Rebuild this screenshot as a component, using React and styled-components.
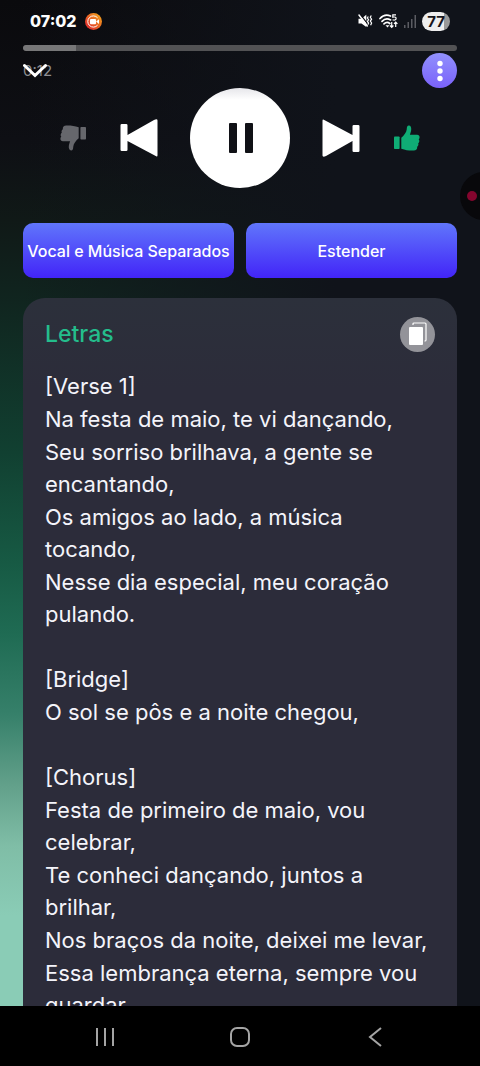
import React from 'react'
import styled, { createGlobalStyle } from 'styled-components'

const GlobalStyle = createGlobalStyle`
    * {
        box-sizing: border-box;
    }

    body {
        margin: 0;
        background: #000;
        font-family: 'Inter', 'Noto Sans', sans-serif;
        color: #FDFDFD;
    }

    button {
        border: 0;
        padding: 0;
        background: none;
        color: inherit;
        font-family: inherit;
        cursor: pointer;
    }

    svg {
        display: block;
    }
`;

const Screen = styled.div`
    position: relative;
    display: flex;
    flex-direction: column;
    height: 100vh;
    overflow: hidden;
`;

const Player = styled.main`
    flex: 1;
    min-height: 0;
    overflow: hidden;
    padding: 0 23px;
    background:
        linear-gradient(90deg, transparent 0, transparent 22px, #10131a 70%),
        linear-gradient(180deg, #0a0a0d 0, #0e0f14 14%, #101917 22%, #10251f 30%, #114031 45%, #175a44 56%, #1f6b53 63%, #36806a 71%, #62a08a 78%, #7fbda6 84%, #8accb6 91%);
`;

const StatusBar = styled.header`
    display: flex;
    align-items: center;
    justify-content: space-between;
    height: 45px;
    padding: 0 7px;
    padding-bottom: 3px;
`;

const StatusGroup = styled.div`
    display: flex;
    align-items: center;
    gap: ${props => props.$gap};
`;

const Clock = styled.span`
    font-size: 16px;
    font-weight: 800;
`;

const Battery = styled.span`
    width: 28px;
    border-radius: 10px;
    background: linear-gradient(90deg, #eee 77%, #999 77%);
    color: #15151a;
    font-size: 15px;
    font-weight: 700;
    line-height: 19px;
    text-align: center;
`;

const Track = styled.div`
    height: 6px;
    border-radius: 3px;
    background: #525254;
    overflow: hidden;
`;

const Played = styled.div`
    height: 100%;
    border-radius: 3px 0 0 3px;
    background: #777778;
`;

const TimeRow = styled.div`
    display: flex;
    align-items: center;
    justify-content: space-between;
    height: 37px;
    padding-top: 2px;
`;

const Elapsed = styled.div`
    position: relative;
    color: #8e8e92;
    font-size: 15px;
    line-height: 20px;
`;

const Collapse = styled.button`
    position: absolute;
    top: 0;
    left: 0;
`;

const MenuButton = styled.button`
    display: grid;
    place-items: center;
    width: 35px;
    height: 35px;
    border-radius: 50%;
    background: linear-gradient(180deg, #9190fc, #7a62fa);
`;

const Controls = styled.div`
    display: flex;
    align-items: center;
    justify-content: center;
    gap: 32px;
`;

const ControlButton = styled.button`
    display: grid;
    place-items: center;
    width: ${props => props.$width};
    height: 38px;
    color: ${props => props.$color || '#fff'};
`;

const PlayButton = styled.button`
    display: grid;
    place-items: center;
    width: 100px;
    height: 100px;
    border-radius: 50%;
    background: linear-gradient(180deg, #e6e6ea 0, #fff 12%);
    color: #101116;
`;

const Actions = styled.div`
    display: grid;
    grid-template-columns: repeat(2, 1fr);
    gap: 12px;
    margin-top: 35px;
`;

const ActionButton = styled.button`
    height: 55px;
    border-radius: 10px;
    background: linear-gradient(180deg, #6076fb 0, #4224f8 100%);
    color: #fff;
    font-size: 16px;
    font-weight: 500;
    white-space: nowrap;
`;

const LyricsCard = styled.section`
    margin-top: 20px;
    padding: 18px 22px;
    border-radius: 22px;
    background: linear-gradient(180deg, #2c303b 0, #2c2c3a 90px);
`;

const CardHeader = styled.div`
    display: flex;
    align-items: center;
    justify-content: space-between;
    height: 36px;
    margin-bottom: 18px;
`;

const CardTitle = styled.h2`
    margin: 0;
    color: #24bd8c;
    font-size: 23px;
    font-weight: 500;
`;

const CopyButton = styled.button`
    display: grid;
    place-items: center;
    width: 35px;
    height: 35px;
    border-radius: 50%;
    background: #939399;
`;

const Lyrics = styled.div`
    display: grid;
    gap: 33px;
`;

const Stanza = styled.div`
    display: grid;
    gap: 1px;
`;

const Line = styled.p`
    margin: 0;
    color: #f4f4fa;
    font-size: 22px;
    line-height: 32px;
`;

const RecordBubble = styled.div`
    position: absolute;
    top: 172px;
    right: -28px;
    width: 48px;
    height: 48px;
    padding: 19px 7px;
    border-radius: 50%;
    background: #08080b;
`;

const RecordDot = styled.div`
    width: 10px;
    height: 10px;
    border-radius: 50%;
    background: #84052e;
`;

const SystemNav = styled.nav`
    display: grid;
    grid-template-columns: repeat(3, 135px);
    justify-content: center;
    height: 60px;
    padding-top: 2px;
    background: #000;
`;

const NavButton = styled.button`
    display: grid;
    place-items: center;
`;

const stanzas = [
    [
        '[Verse 1]',
        'Na festa de maio, te vi dançando,',
        'Seu sorriso brilhava, a gente se encantando,',
        'Os amigos ao lado, a música tocando,',
        'Nesse dia especial, meu coração pulando.',
    ],
    [
        '[Bridge]',
        'O sol se pôs e a noite chegou,',
    ],
    [
        '[Chorus]',
        'Festa de primeiro de maio, vou celebrar,',
        'Te conheci dançando, juntos a brilhar,',
        'Nos braços da noite, deixei me levar,',
        'Essa lembrança eterna, sempre vou guardar.',
    ],
];

const RecorderIcon = () => (
    <svg width="17" height="17" viewBox="0 0 17 17">
        <defs>
            <linearGradient id="rec" x1="0" y1="1" x2="1" y2="0">
                <stop offset="0.2" stopColor="#e0362c" />
                <stop offset="0.9" stopColor="#f5a31c" />
            </linearGradient>
        </defs>
        <circle cx="8.5" cy="8.5" r="8.5" fill="url(#rec)" />
        <path d="M12.6 12.2A5.6 5.6 0 1 1 12.6 4.8" fill="none" stroke="#fff" strokeWidth="1" />
        <rect x="5" y="6" width="6" height="5.2" rx="1" fill="#fff" />
        <path d="M11 8.6L14 6.2V11z" fill="#fff" />
    </svg>
);

const MuteIcon = () => (
    <svg width="15" height="14" viewBox="0 0 15 14" fill="none" stroke="#fff">
        <path d="M0.500 4.700H3.500L8.300 0.800V13L3.500 9.600H0.500z" fill="#fff" stroke="none" />
        <path d="M2.400 0.600L10 10.300" stroke="#0a0b12" strokeWidth="1.300" />
        <path d="M1 1L9.300 12" strokeWidth="1.500" strokeLinecap="round" />
        <path d="M10.300 2.500l-.9 1.500 1.200 1.700-1.200 1.700 1.200 1.700-.8 1.500M13.300 1.500l-1 1.800 1.300 1.900-1.300 1.900 1.300 1.900-1 2.200" strokeWidth="1.200" />
    </svg>
);

const WifiIcon = () => (
    <svg width="19" height="15" viewBox="0 0 19 15" fill="none" stroke="#fff" strokeWidth="1.700">
        <path d="M1 4.500C4 1.200 8 0.600 11.500 2M3 7.300c2.400-2.500 5.600-3 8.600-1.400M5 9.900c1.700-1.600 4-1.800 5.800-.4" strokeLinecap="round" />
        <path d="M6.500 11.300L8.500 13.500 10.500 11.300z" fill="#fff" stroke="none" />
        <path d="M17 0.900h-3.200v2.300c2.400-.6 3.500.2 3.300 1.500-.2 1.400-2 1.800-3.500 1" strokeWidth="1.200" />
        <path d="M12.700 8v5M11 11.500l1.700 1.800 1.700-1.800M16.700 13V8.200M15 9.800l1.700-1.800 1.700 1.800" strokeWidth="1.200" />
    </svg>
);

const SignalIcon = () => (
    <svg width="12" height="13" viewBox="0 0 12 13" fill="#5b5c62">
        <rect x="0" y="10" width="1.500" height="3" />
        <rect x="3.500" y="7" width="1.500" height="6" />
        <rect x="7" y="4" width="1.500" height="9" />
        <rect x="10.500" y="0" width="1.500" height="13" />
    </svg>
);

const ThumbIcon = () => (
    <svg width="26" height="26" viewBox="0 0 26 26" fill="currentColor">
        <rect x="0" y="11.500" width="5.600" height="12.500" rx="0.800" />
        <path d="M7.300 12.800C10 10.500 12.400 7.400 12.700 4.500C12.900 2 13.200 0.600 14.900 0.600C16.700 0.600 17.400 2.700 17.200 4.700C17 6.800 16.300 8.200 15.900 9.700H23C24.900 9.700 26 11.200 25.500 12.900C25.400 13.400 25.100 13.900 24.700 14.200C25.700 15.600 25.500 17.300 24.200 18.300C24.700 19.700 24.300 21 23.200 21.700C23.400 24.300 22.100 25.500 19.800 25.500C15 25.600 11.500 25.200 7.300 23.700z" />
    </svg>
);

const FlippedIcon = styled.span`
    transform: rotate(180deg);
`;

const SkipIcon = () => (
    <svg width="38" height="38" viewBox="0 0 38 38" fill="currentColor">
        <path d="M1.800 0.700L30.500 15.900V7.300Q30.500 6 31.800 6H36.200Q37.500 6 37.500 7.300V31.700Q37.500 33 36.200 33H31.800Q30.500 33 30.500 31.700V22L4 37Q0.500 38.500 0.500 36.500V1.800Q0.500 0 1.800 0.700z" />
    </svg>
);

function App() {
    return (
        <Screen>
            <GlobalStyle />
            <Player>
                <StatusBar>
                    <StatusGroup $gap="8px">
                        <Clock>07:02</Clock>
                        <RecorderIcon />
                    </StatusGroup>
                    <StatusGroup $gap="6px">
                        <MuteIcon />
                        <WifiIcon />
                        <SignalIcon />
                        <Battery>77</Battery>
                    </StatusGroup>
                </StatusBar>

                <Track>
                    <Played style={{ width: `${(12 / 98) * 100}%` }} />
                </Track>
                <TimeRow>
                    <Elapsed>
                        0:12
                        <Collapse aria-label="Fechar">
                            <svg width="26" height="20" viewBox="0 0 26 20" fill="none" stroke="#fff" strokeWidth="3" strokeLinecap="round">
                                <path d="M1.500 4.500L12 14.500L22.500 4.500" />
                            </svg>
                        </Collapse>
                    </Elapsed>
                    <MenuButton aria-label="Mais opções">
                        <svg width="6" height="22" viewBox="0 0 6 22" fill="#fff">
                            <circle cx="3" cy="3.500" r="2.700" />
                            <circle cx="3" cy="11" r="2.700" />
                            <circle cx="3" cy="18.500" r="2.700" />
                        </svg>
                    </MenuButton>
                </TimeRow>

                <Controls>
                    <ControlButton $width="30px" $color="#66676c" aria-label="Não gostei">
                        <FlippedIcon><ThumbIcon /></FlippedIcon>
                    </ControlButton>
                    <ControlButton $width="38px" aria-label="Anterior">
                        <FlippedIcon><SkipIcon /></FlippedIcon>
                    </ControlButton>
                    <PlayButton aria-label="Pausar">
                        <svg width="26" height="30" viewBox="0 0 26 30" fill="currentColor">
                            <rect x="2" y="0" width="8" height="30" rx="1" />
                            <rect x="18" y="0" width="8" height="30" rx="1" />
                        </svg>
                    </PlayButton>
                    <ControlButton $width="38px" aria-label="Próxima">
                        <SkipIcon />
                    </ControlButton>
                    <ControlButton $width="30px" $color="#0fad75" aria-label="Gostei">
                        <ThumbIcon />
                    </ControlButton>
                </Controls>

                <Actions>
                    <ActionButton>Vocal e Música Separados</ActionButton>
                    <ActionButton>Estender</ActionButton>
                </Actions>

                <LyricsCard>
                    <CardHeader>
                        <CardTitle>Letras</CardTitle>
                        <CopyButton aria-label="Copiar letras">
                            <svg width="20" height="24" viewBox="0 0 20 24">
                                <rect x="1" y="5" width="14" height="18" rx="1" fill="#fff" />
                                <path d="M5 3V2Q5 1 6 1H17Q18 1 18 2V18Q18 19 17 19H16.500" fill="none" stroke="#fff" strokeWidth="1.200" />
                            </svg>
                        </CopyButton>
                    </CardHeader>
                    <Lyrics>
                        {stanzas.map(lines => (
                            <Stanza key={lines[0]}>
                                {lines.map(line => <Line key={line}>{line}</Line>)}
                            </Stanza>
                        ))}
                    </Lyrics>
                </LyricsCard>
            </Player>

            <RecordBubble>
                <RecordDot />
            </RecordBubble>

            <SystemNav>
                <NavButton aria-label="Recentes">
                    <svg width="20" height="20" viewBox="0 0 20 20" stroke="#a4a4a4" strokeWidth="2">
                        <path d="M2 1V19M10 1V19M18 1V19" />
                    </svg>
                </NavButton>
                <NavButton aria-label="Início">
                    <svg width="22" height="22" viewBox="0 0 22 22" fill="none" stroke="#a4a4a4" strokeWidth="2">
                        <rect x="2" y="2" width="18" height="18" rx="6" />
                    </svg>
                </NavButton>
                <NavButton aria-label="Voltar">
                    <svg width="14" height="22" viewBox="0 0 14 22" fill="none" stroke="#a4a4a4" strokeWidth="2">
                        <path d="M13 2L2 11L13 20" />
                    </svg>
                </NavButton>
            </SystemNav>
        </Screen>
    );
}

export default App;
